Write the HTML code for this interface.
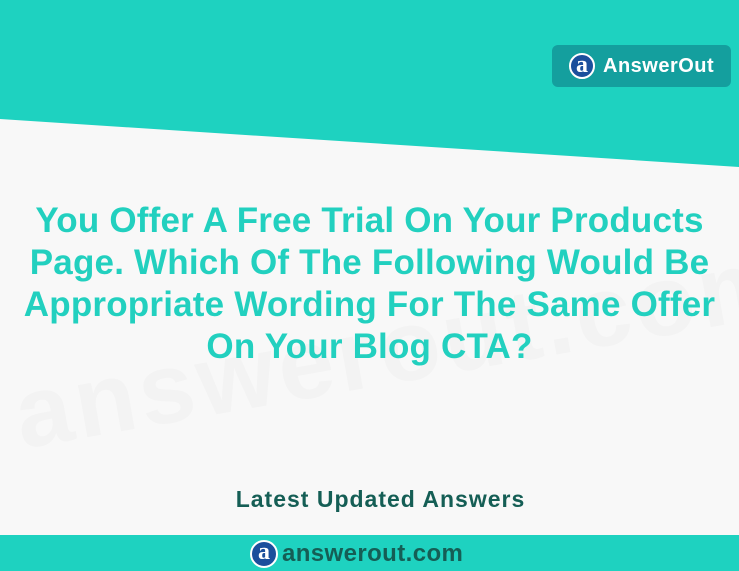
<!DOCTYPE html>
<html><head><style>
body{margin:0;width:739px;height:571px;overflow:hidden;background:#f8f8f8;font-family:"Liberation Sans",sans-serif;position:relative}
.top{position:absolute;left:0;top:0;width:739px;height:571px}
.badge{position:absolute;left:552px;top:45px;width:179px;height:42px;background:#149f9e;border-radius:6px;color:#fff;font-weight:bold;font-size:20px;letter-spacing:0.5px;display:flex;align-items:center}
.logo{width:26px;height:26px;border-radius:50%;background:#1b4f9c;border:2px solid #fff;box-sizing:border-box;color:#fff;font-family:"Liberation Serif",serif;font-size:24px;line-height:20px;text-align:center;margin:0 8px 0 17px;letter-spacing:0}
h1{position:absolute;left:0;top:200px;width:739px;margin:0;text-align:center;color:#22d0bf;font-size:35px;line-height:42px;font-weight:bold;letter-spacing:0.2px}
.wm{position:absolute;left:10px;top:290px;font-size:100px;font-weight:bold;color:#f3f3f3;transform:rotate(-10deg);letter-spacing:4px}
.latest{position:absolute;left:0;top:486px;width:761px;text-align:center;color:#155e55;font-weight:bold;font-size:23px;letter-spacing:1px}
.band{position:absolute;left:0;top:535px;width:739px;height:36px;background:#1ed2c0}
.foot{position:absolute;left:250px;top:540px;display:flex;align-items:center;color:#155e55;font-weight:bold;font-size:24px;letter-spacing:0.4px}
.foot .logo{margin:0 4px 0 0;width:28px;height:28px}
</style></head><body>
<svg class="top" viewBox="0 0 739 571"><polygon points="0,0 739,0 739,167 0,119" fill="#1ed2c0"/></svg>
<div class="wm">answerout.com</div>
<div class="badge"><div class="logo">a</div>AnswerOut</div>
<h1>You Offer A Free Trial On Your Products<br>Page. Which Of The Following Would Be<br>Appropriate Wording For The Same Offer<br>On Your Blog CTA?</h1>
<div class="latest">Latest Updated Answers</div>
<div class="band"></div>
<div class="foot"><div class="logo">a</div>answerout.com</div>
</body></html>
